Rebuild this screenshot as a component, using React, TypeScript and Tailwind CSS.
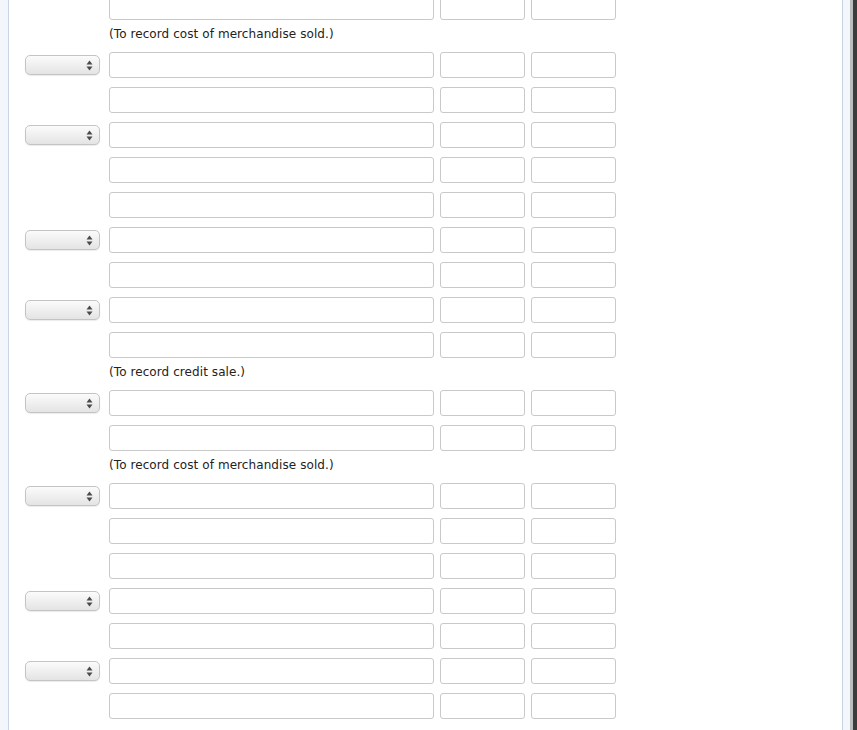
type Row = { kind: 'row'; select: boolean } | { kind: 'label'; text: string }

const rows: Row[] = [
  { kind: 'row', select: false },
  { kind: 'label', text: '(To record cost of merchandise sold.)' },
  { kind: 'row', select: true },
  { kind: 'row', select: false },
  { kind: 'row', select: true },
  { kind: 'row', select: false },
  { kind: 'row', select: false },
  { kind: 'row', select: true },
  { kind: 'row', select: false },
  { kind: 'row', select: true },
  { kind: 'row', select: false },
  { kind: 'label', text: '(To record credit sale.)' },
  { kind: 'row', select: true },
  { kind: 'row', select: false },
  { kind: 'label', text: '(To record cost of merchandise sold.)' },
  { kind: 'row', select: true },
  { kind: 'row', select: false },
  { kind: 'row', select: false },
  { kind: 'row', select: true },
  { kind: 'row', select: false },
  { kind: 'row', select: true },
  { kind: 'row', select: false },
]

function SelectBox() {
  return (
    <div className="flex h-[20px] w-[75px] items-center justify-end rounded-[5px] border border-[#c4c4c4] bg-gradient-to-b from-[#fbfbfb] to-[#e4e4e4] pr-[6px] shadow-[0_1px_1px_rgba(0,0,0,0.08)]">
      <svg width="7" height="11" viewBox="0 0 7 11">
        <path d="M3.5 0.5 L6.5 4.5 L0.5 4.5 Z" fill="#4a4a4a" />
        <path d="M0.5 6.5 L6.5 6.5 L3.5 10.5 Z" fill="#4a4a4a" />
      </svg>
    </div>
  )
}

function EntryRow({ select }: { select: boolean }) {
  return (
    <div className="flex h-[26px] items-center">
      <div className="flex w-[84px] items-center">{select && <SelectBox />}</div>
      <div className="flex gap-[6px]">
        <div className="h-[26px] w-[325px] rounded-[3px] border border-[#c9c9c9] bg-white" />
        <div className="h-[26px] w-[85px] rounded-[3px] border border-[#c9c9c9] bg-white" />
        <div className="h-[26px] w-[85px] rounded-[3px] border border-[#c9c9c9] bg-white" />
      </div>
    </div>
  )
}

export default function App() {
  return (
    <div className="flex h-[730px] w-[857px] overflow-hidden bg-white font-['DejaVu_Sans',Verdana,sans-serif] text-[#222]">
      {/* left gutter */}
      <div className="w-[8px] shrink-0 bg-[#f3f7fb]" />
      <div className="w-px shrink-0 bg-[#c6d4e3]" />

      {/* main form */}
      <div className="flex-1 pl-[16px]">
        <div className="-mt-[6px] flex flex-col gap-[9px]">
          {rows.map((r, i) =>
            r.kind === 'row' ? (
              <EntryRow key={i} select={r.select} />
            ) : (
              <div key={i} className="-mt-[2px] h-[16px] pl-[84px] text-[12px] leading-[15px] tracking-[0.08px]">
                {r.text}
              </div>
            ),
          )}
        </div>
      </div>

      {/* right edge */}
      <div className="w-px shrink-0 bg-[#c6d4e3]" />
      <div className="w-[7px] shrink-0 bg-[#f3f7fb]" />
      <div className="w-[3px] shrink-0 bg-[#bdbdbd]" />
      <div className="w-[4px] shrink-0 bg-[#3c3c3c]" />
    </div>
  )
}
